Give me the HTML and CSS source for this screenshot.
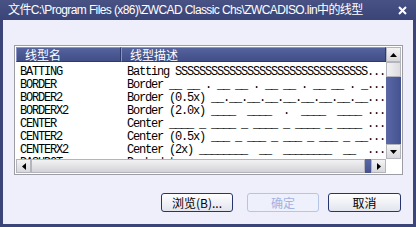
FILE: index.html
```html
<!DOCTYPE html>
<html>
<head>
<meta charset="utf-8">
<link rel="stylesheet" href="styles.css">
</head>
<body>
<div class="window">
  <div class="titlebar">
    <span class="title">文件C:\Program Files (x86)\ZWCAD Classic Chs\ZWCADISO.lin中的线型</span>
    <span class="close">
      <svg width="9" height="9" viewBox="0 0 9 9"><path d="M1 1L8 8M8 1L1 8" stroke="#fff" stroke-width="2"/></svg>
    </span>
  </div>
  <div class="client">
    <div class="listbox">
      <div class="view">
        <div class="header">
          <div class="hcell c1">线型名</div>
          <div class="hcell c2">线型描述</div>
        </div>
        <div class="rows">
          <div class="row"><span class="n">BATTING</span><span class="d">Batting SSSSSSSSSSSSSSSSSSSSSSSSSSSSSSSS...</span></div>
          <div class="row"><span class="n">BORDER</span><span class="d">Border __ __ . __ __ . __ __ . __ __ . _...</span></div>
          <div class="row"><span class="n">BORDER2</span><span class="d">Border (0.5x) __.__.__.__.__.__.__.__.__...</span></div>
          <div class="row"><span class="n">BORDERX2</span><span class="d">Border (2.0x) ____  ____  .  ____  ____ ...</span></div>
          <div class="row"><span class="n">CENTER</span><span class="d">Center ____ _ ____ _ ____ _ ____ _ ____ ...</span></div>
          <div class="row"><span class="n">CENTER2</span><span class="d">Center (0.5x) ___ _ ___ _ ___ _ ___ _ __...</span></div>
          <div class="row"><span class="n">CENTERX2</span><span class="d">Center (2x) ________  __  ________  __  ...</span></div>
          <div class="row"><span class="n">DASHDOT</span><span class="d">Dash dot __ . __ . __ . __ . __ . __ . _...</span></div>
        </div>
      </div>
      <div class="vscroll">
        <div class="sbtn"><svg width="7" height="4" viewBox="0 0 7 4"><path d="M0 4L3.5 0L7 4Z" fill="#000"/></svg></div>
        <div class="vthumb"></div>
        <div class="vtrack"></div>
        <div class="sbtn"><svg width="7" height="4" viewBox="0 0 7 4"><path d="M0 0L3.5 4L7 0Z" fill="#000"/></svg></div>
      </div>
      <div class="hscroll">
        <div class="sbtn"><svg width="4" height="7" viewBox="0 0 4 7"><path d="M4 0L0 3.5L4 7Z" fill="#000"/></svg></div>
        <div class="hthumb"></div>
        <div class="htrack"></div>
        <div class="sbtn"><svg width="4" height="7" viewBox="0 0 4 7"><path d="M0 0L4 3.5L0 7Z" fill="#000"/></svg></div>
      </div>
      <div class="corner"></div>
    </div>
    <div class="buttons">
      <div class="btn browse">浏览(B)...</div>
      <div class="btn disabled">确定</div>
      <div class="btn cancel">取消</div>
    </div>
  </div>
</div>
</body>
</html>
```

FILE: styles.css
```css
html, body {
  margin: 0;
  padding: 0;
  background: #3b4577;
}
.window {
  width: 416px;
  height: 227px;
  box-sizing: border-box;
  background: #3b4577;
  padding: 0 3px 3px 3px;
  display: flex;
  flex-direction: column;
}
.titlebar {
  height: 20px;
  flex: none;
  display: flex;
  align-items: center;
  justify-content: space-between;
  background: linear-gradient(#485284, #3a4476);
  margin: 0 -3px;
  padding: 0 9px 0 8px;
}
.title {
  color: #ffffff;
  font-family: "Liberation Sans", "Noto Sans CJK SC", sans-serif;
  font-size: 12px;
  letter-spacing: -0.6px;
  white-space: nowrap;
  line-height: 20px;
}
.close {
  display: flex;
  align-items: center;
}
.client {
  flex: 1;
  background: #efeffb;
  padding: 25px 0 0 11px;
  display: flex;
  flex-direction: column;
}
.listbox {
  width: 389px;
  height: 130px;
  box-sizing: border-box;
  border: 1px solid #9c9ca4;
  padding: 1px;
  background: #ffffff;
  display: grid;
  grid-template-columns: 370px 15px;
  grid-template-rows: 112px 14px;
}
.view {
  overflow: hidden;
  background: #ffffff;
}
.header {
  height: 15px;
  display: flex;
  background: linear-gradient(#56649f, #3f4c86);
}
.hcell {
  box-sizing: border-box;
  height: 15px;
  border: 1px solid #8a94c4;
  border-right-color: #2e3a6c;
  border-bottom-color: #2e3a6c;
  color: #ffffff;
  font-family: "Noto Sans CJK SC", sans-serif;
  font-size: 12px;
  line-height: 13px;
  padding-left: 8px;
  white-space: nowrap;
}
.hcell.c1 { width: 105px; }
.hcell.c2 { flex: 1; }
.rows {
  padding-top: 4px;
}
.row {
  height: 13px;
  display: flex;
  font-family: "Liberation Mono", "DejaVu Sans Mono", monospace;
  font-size: 12px;
  letter-spacing: -1.2px;
  line-height: 13px;
  color: #000000;
  white-space: pre;
}
.row .n {
  width: 101px;
  padding-left: 4px;
  flex: none;
  overflow: hidden;
}
.row .d {
  padding-left: 6px;
  overflow: hidden;
}
.vscroll {
  display: flex;
  flex-direction: column;
}
.hscroll {
  display: flex;
}
.sbtn {
  width: 15px;
  height: 15px;
  flex: none;
  box-sizing: border-box;
  border: 1px solid #b4b4bc;
  background: linear-gradient(#f4f4f4, #d8d8dc);
  display: flex;
  align-items: center;
  justify-content: center;
}
.hscroll .sbtn { height: 14px; }
.vthumb {
  height: 15px;
  flex: none;
  box-sizing: border-box;
  border: 1px solid #b4b4bc;
  background: linear-gradient(90deg, #f2f2f4, #dcdce0);
}
.vtrack {
  flex: 1;
  background: linear-gradient(90deg, #5a68a8, #44528e);
}
.hthumb {
  width: 334px;
  flex: none;
  box-sizing: border-box;
  border: 1px solid #b4b4bc;
  background: linear-gradient(#f2f2f4, #d4d4d8);
}
.htrack {
  flex: 1;
  background: linear-gradient(#5a68a8, #44528e);
}
.corner {
  background: #ffffff;
}
.buttons {
  display: flex;
  margin-top: 18px;
  padding-left: 147px;
}
.btn {
  width: 72px;
  height: 19px;
  box-sizing: border-box;
  border: 1px solid #26366a;
  border-radius: 3px;
  background: linear-gradient(#ffffff, #e2e4ee);
  font-family: "Noto Sans CJK SC", sans-serif;
  font-size: 12px;
  line-height: 17px;
  text-align: center;
  color: #000000;
}
.btn.disabled {
  margin-left: 14px;
  border-color: #b6c4e6;
  background: #eef0fb;
  color: #a2b2e2;
}
.btn.cancel {
  margin-left: 9px;
  width: 73px;
}
```
